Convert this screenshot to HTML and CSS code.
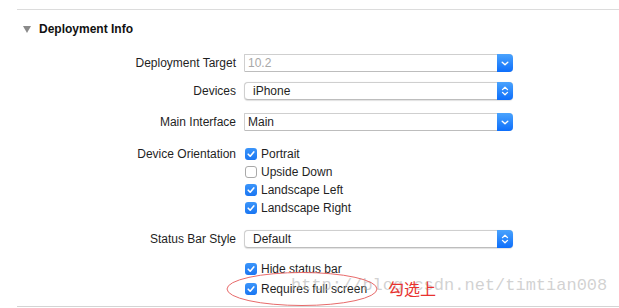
FILE: index.html
```html
<!DOCTYPE html>
<html>
<head>
<meta charset="utf-8">
<link rel="stylesheet" href="styles.css">
</head>
<body>
<div class="panel">
  <div class="rule"></div>
  <div class="header">
    <span class="disclosure"></span>
    <span class="title">Deployment Info</span>
  </div>
  <div class="form">
    <div class="row r1">
      <div class="label">Deployment Target</div>
      <div class="combo">
        <span class="value muted">10.2</span>
        <span class="btn"><svg width="16" height="18" viewBox="0 0 16 18"><path d="M5.2 8.2 L8 10.8 L10.8 8.2" fill="none" stroke="#fff" stroke-width="1.4" stroke-linecap="round" stroke-linejoin="round"/></svg></span>
      </div>
    </div>
    <div class="row r2">
      <div class="label">Devices</div>
      <div class="popup">
        <span class="value pad">iPhone</span>
        <span class="btn"><svg width="16" height="18" viewBox="0 0 16 18"><path d="M5.5 7.6 L8 5.2 L10.5 7.6 M5.5 10.4 L8 12.8 L10.5 10.4" fill="none" stroke="#fff" stroke-width="1.3" stroke-linecap="round" stroke-linejoin="round"/></svg></span>
      </div>
    </div>
    <div class="row r3">
      <div class="label">Main Interface</div>
      <div class="combo">
        <span class="value">Main</span>
        <span class="btn"><svg width="16" height="18" viewBox="0 0 16 18"><path d="M5.2 8.2 L8 10.8 L10.8 8.2" fill="none" stroke="#fff" stroke-width="1.4" stroke-linecap="round" stroke-linejoin="round"/></svg></span>
      </div>
    </div>
    <div class="row r4">
      <div class="label">Device Orientation</div>
      <div class="checks">
        <div class="check"><span class="box on"><svg width="12" height="12" viewBox="0 0 12 12"><path d="M3.2 6.2 L5.2 8.2 L8.8 3.9" fill="none" stroke="#fff" stroke-width="1.6" stroke-linecap="round" stroke-linejoin="round"/></svg></span>Portrait</div>
        <div class="check"><span class="box"></span>Upside Down</div>
        <div class="check"><span class="box on"><svg width="12" height="12" viewBox="0 0 12 12"><path d="M3.2 6.2 L5.2 8.2 L8.8 3.9" fill="none" stroke="#fff" stroke-width="1.6" stroke-linecap="round" stroke-linejoin="round"/></svg></span>Landscape Left</div>
        <div class="check"><span class="box on"><svg width="12" height="12" viewBox="0 0 12 12"><path d="M3.2 6.2 L5.2 8.2 L8.8 3.9" fill="none" stroke="#fff" stroke-width="1.6" stroke-linecap="round" stroke-linejoin="round"/></svg></span>Landscape Right</div>
      </div>
    </div>
    <div class="row r5">
      <div class="label">Status Bar Style</div>
      <div class="popup">
        <span class="value pad">Default</span>
        <span class="btn"><svg width="16" height="18" viewBox="0 0 16 18"><path d="M5.5 7.6 L8 5.2 L10.5 7.6 M5.5 10.4 L8 12.8 L10.5 10.4" fill="none" stroke="#fff" stroke-width="1.3" stroke-linecap="round" stroke-linejoin="round"/></svg></span>
      </div>
    </div>
    <div class="row r6">
      <div class="label"></div>
      <div class="check"><span class="box on"><svg width="12" height="12" viewBox="0 0 12 12"><path d="M3.2 6.2 L5.2 8.2 L8.8 3.9" fill="none" stroke="#fff" stroke-width="1.6" stroke-linecap="round" stroke-linejoin="round"/></svg></span>Hide status bar</div>
    </div>
    <div class="row r7">
      <div class="label"></div>
      <div class="check"><span class="box on"><svg width="12" height="12" viewBox="0 0 12 12"><path d="M3.2 6.2 L5.2 8.2 L8.8 3.9" fill="none" stroke="#fff" stroke-width="1.6" stroke-linecap="round" stroke-linejoin="round"/></svg></span>Requires full screen</div>
    </div>
  </div>
  <div class="rule bottom"></div>

  <div class="watermark">http://blog.csdn.net/timtian008</div>
  <svg class="ellipse" width="154" height="38" viewBox="0 0 154 38"><ellipse cx="77" cy="19" rx="75" ry="16.5" fill="none" stroke="#e86a6a" stroke-width="1"/></svg>
  <div class="note">勾选上</div>
</div>
</body>
</html>
```
FILE: styles.css
```css
html, body {
  margin: 0;
  padding: 0;
  background: #fff;
}
body {
  font-family: "Liberation Sans", Arial, sans-serif;
  font-size: 12px;
  color: #1f1f1f;
}
.panel {
  position: relative;
  width: 619px;
  height: 308px;
  padding-top: 9px;
  box-sizing: border-box;
  overflow: hidden;
}
.rule {
  margin-left: 17px;
  border-top: 1px solid #dcdcdc;
}
.rule.bottom {
  margin-top: 8px;
  border-top-color: #d4d4d4;
}
.header {
  height: 38px;
  display: flex;
  align-items: center;
  padding-left: 23px;
}
.disclosure {
  width: 0;
  height: 0;
  border-left: 4px solid transparent;
  border-right: 4px solid transparent;
  border-top: 7px solid #8a8a8a;
  margin-right: 8px;
}
.title {
  font-weight: bold;
  color: #111;
}
.form {
  display: flex;
  flex-direction: column;
}
.row {
  display: grid;
  grid-template-columns: 236px 269px;
  column-gap: 8px;
  align-items: center;
}
.label {
  text-align: right;
  white-space: nowrap;
}
.r1 { margin-top: 6px; }
.r2 { margin-top: 10px; }
.r3 { margin-top: 13px; }
.r4 { margin-top: 14px; align-items: start; }
.r4 .label { line-height: 18px; }
.r5 { margin-top: 13px; }
.r6 { margin-top: 12px; }
.r7 { margin-top: 2px; }

.combo, .popup {
  height: 18px;
  box-sizing: border-box;
  display: flex;
  align-items: center;
  justify-content: space-between;
  background: #fff;
  border: 1px solid #cfcfcf;
  border-bottom-color: #bdbdbd;
  position: relative;
}
.combo {
  border-radius: 1px 4px 4px 1px;
  border-right: none;
}
.popup {
  border-radius: 4px;
  border-right: none;
  box-shadow: 0 0.5px 1px rgba(0,0,0,0.12);
}
.value {
  padding-left: 3px;
  line-height: 16px;
}
.value.pad { padding-left: 8px; }
.value.muted { color: #a8a8a8; }
.btn {
  width: 16px;
  height: 18px;
  margin: -1px 0;
  border-radius: 0 4px 4px 0;
  background: linear-gradient(#4aa3fd, #0d6efb);
  display: flex;
}
.checks {
  display: flex;
  flex-direction: column;
}
.check {
  height: 18px;
  display: flex;
  align-items: center;
  white-space: nowrap;
}
.box {
  width: 12px;
  height: 12px;
  box-sizing: border-box;
  border-radius: 3px;
  border: 1px solid #a9a9a9;
  background: #fff;
  margin-left: 1px;
  margin-right: 4px;
  display: flex;
}
.box.on {
  border: none;
  background: linear-gradient(#3b95fa, #1a76f2);
}
.watermark {
  position: absolute;
  left: 291px;
  top: 276px;
  font-family: "Liberation Mono", "Courier New", monospace;
  font-size: 17px;
  line-height: 20px;
  color: rgba(180, 180, 180, 0.6);
  white-space: nowrap;
}
.ellipse {
  position: absolute;
  left: 225px;
  top: 270px;
}
.note {
  position: absolute;
  left: 388px;
  top: 278px;
  font-family: "Noto Sans CJK SC", sans-serif;
  font-size: 16px;
  line-height: 20px;
  color: #e8322f;
}
```
